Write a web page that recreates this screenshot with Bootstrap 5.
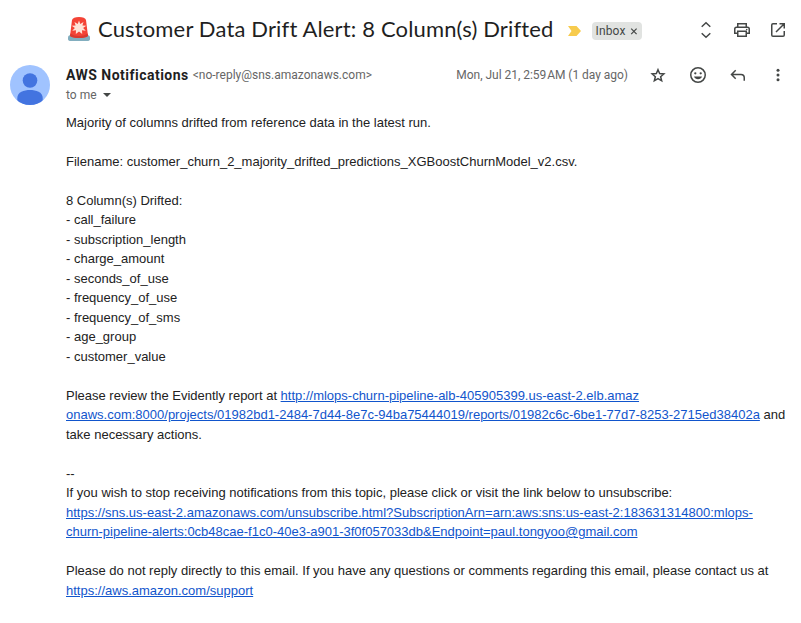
<!DOCTYPE html>
<html lang="en">
<head>
<meta charset="utf-8">
<meta name="viewport" content="width=device-width, initial-scale=1">
<title>Customer Data Drift Alert</title>
<link href="https://cdn.jsdelivr.net/npm/bootstrap@5.3.0/dist/css/bootstrap.min.css" rel="stylesheet">
<style>
body { background: #fff; color: #1f1f1f; font-family: Roboto, "Liberation Sans", sans-serif; }
svg { display: block; flex: none; }
.mail { width: 801px; height: 623px; overflow: hidden; }
.subject-bar { height: 60px; padding-left: 66px; padding-right: 13px; }
.siren { margin-bottom: 2px; }
.subject { font: 400 22px/28px Lato, sans-serif; letter-spacing: .15px; margin: 0 0 2px 6px; white-space: nowrap; }
.marker { margin: 1px 0 0 14px; }
.label-chip { background: #e1e3e1; color: #444746; font-size: 12px; line-height: 18px; height: 18px; width: 50px; border-radius: 4px; padding-left: 4px; margin: 2px 0 0 11px; letter-spacing: .15px; }
.tools { gap: 16px; color: #444746; }
.tools.wide { gap: 20px; margin-left: 20px; }
.sender-row { height: 52.75px; padding: 5px 13px 0 10px; }
.who { margin-left: 16px; }
.line-a { height: 20px; white-space: nowrap; }
.from { font: 700 14px/20px Roboto, sans-serif; letter-spacing: .48px; }
.muted { color: #666; font-size: 12px; line-height: 20px; }
.addr { margin-left: 4px; }
.date { letter-spacing: -.03px; }
.tight { word-spacing: -2px; }
.caret { margin-left: 6px; }
.message { font: 13px/19.5px "Liberation Sans", Arial, sans-serif; color: #222; padding-left: 66px; white-space: pre; }
.message a { color: #1155cc; text-decoration: underline; }
</style>
<script src="https://cdn.jsdelivr.net/npm/bootstrap@5.3.0/dist/js/bootstrap.bundle.min.js"></script>
</head>
<body>
<main class="mail">
  <header class="subject-bar d-flex align-items-center">
    <svg class="siren" width="26" height="26" viewBox="0 0 26 26" aria-label="Alert">
      <path d="M2 21.5 Q2 19 5 19 H21 Q24 19 24 21.5 V23 Q24 25 21 25 H5 Q2 25 2 23Z" fill="#82aebf"/>
      <path d="M6 4 Q7 1 13 1 Q19 1 20 4 L22 20 Q19 22 13 22 Q7 22 4 20Z" fill="#f44336"/>
      <path d="M4.300 17.500 L4 20 Q7 22 13 22 Q19 22 22 20 L21.700 17.500 Q18 20 13 20 Q8 20 4.300 17.500Z" fill="#d83a30"/>
      <path d="M13 4.500 l1.300 3.500 3.200-2 -1.100 3.600 3.900.2 -3.200 2.100 2.700 2.800 -3.800-.5 .2 3.800 -3.200-2.600 -3.200 2.600 .2-3.800 -3.800.5 2.700-2.800 -3.200-2.100 3.900-.2 -1.100-3.600 3.200 2z" fill="#ffe4d8"/>
    </svg>
    <h1 class="subject">Customer Data Drift Alert: 8 Column(s) Drifted</h1>
    <svg class="marker" width="13" height="10" viewBox="0 0 13 10"><path d="M0 0 H8.500 L13 5 8.500 10 H0 L3.500 5Z" fill="#f7cb4d"/></svg>
    <span class="label-chip d-flex align-items-center">Inbox<svg width="8" height="8" viewBox="0 0 8 8" class="ms-1"><path d="M1.200 1.700 6.600 7.100M6.600 1.700 1.200 7.100" stroke="#444746" stroke-width="1.200"/></svg></span>
    <div class="tools d-flex ms-auto">
      <svg width="20" height="20" viewBox="0 0 20 20" fill="none" stroke="currentColor" stroke-width="1.500"><path d="M5.700 6.800 10 2.800l4.300 4M5.700 13.200 10 17.200l4.300-4"/></svg>
      <svg width="20" height="20" viewBox="0 0 20 20" fill="none" stroke="currentColor" stroke-width="1.500"><path d="M5.750 7V3.750h8.500V7M5.750 13.250h-3V9c0-1 .7-1.750 1.750-1.750h11c1 0 1.750.7 1.750 1.750v4.250h-3M5.750 11.250h8.500v5h-8.500z"/><circle cx="14.700" cy="9.500" r=".8" fill="currentColor" stroke="none"/></svg>
      <svg width="20" height="20" viewBox="0 0 20 20" fill="none" stroke="currentColor" stroke-width="1.500"><path d="M9 3.750H5c-.8 0-1.250.5-1.250 1.250v10c0 .8.500 1.250 1.250 1.250h10c.8 0 1.250-.5 1.250-1.250v-4M11.500 3.750h4.750V8.500M16 4 8 12"/></svg>
    </div>
  </header>
  <section class="sender-row d-flex align-items-start">
    <svg width="40" height="40" viewBox="0 0 40 40"><defs><clipPath id="disc"><circle cx="20" cy="20" r="20"/></clipPath></defs><g clip-path="url(#disc)"><path d="M0 0h40v40H0z" fill="#a0c3ff"/><circle cx="20" cy="15.500" r="7.300" fill="#4374e0"/><path d="M7.300 40V33C7.300 27 14 25 20 25s12.700 2 12.700 8v7z" fill="#4374e0"/></g></svg>
    <div class="who">
      <div class="line-a d-flex align-items-center"><span class="from">AWS Notifications</span><span class="muted addr">&lt;no-reply@sns.amazonaws.com&gt;</span></div>
      <div class="muted d-flex align-items-center"><span>to me</span><svg width="8" height="4" viewBox="0 0 8 4" class="caret"><path d="M0 0h8L4 4z" fill="#444746"/></svg></div>
    </div>
    <div class="ms-auto d-flex align-items-center line-a">
      <span class="muted date">Mon, Jul 21, <span class="tight">2:59 AM</span> (1 day ago)</span>
      <div class="tools wide d-flex">
        <svg width="20" height="20" viewBox="0 0 20 20" fill="none" stroke="currentColor" stroke-width="1.500"><path d="M10 4.700l1.650 3.900 4.200.35-3.200 2.750 1 4.100L10 13.600l-3.650 2.200 1-4.100-3.200-2.750 4.200-.35z"/></svg>
        <svg width="20" height="20" viewBox="0 0 20 20" fill="currentColor"><circle cx="10" cy="10" r="7.250" fill="none" stroke="currentColor" stroke-width="1.500"/><circle cx="7.300" cy="8.300" r="1.150"/><circle cx="12.700" cy="8.300" r="1.150"/><path d="M6 11.600h8c-.6 1.700-2.200 2.700-4 2.700s-3.400-1-4-2.700z"/></svg>
        <svg width="20" height="20" viewBox="0 0 20 20" fill="none" stroke="currentColor" stroke-width="1.500"><path d="M16.250 15.800v-3c0-2-1.250-3.250-3.250-3.250H4.500M7.700 5.300 3.500 9.550l4.200 4.200"/></svg>
        <svg width="20" height="20" viewBox="0 0 20 20" fill="currentColor"><circle cx="10" cy="5.200" r="1.500"/><circle cx="10" cy="10" r="1.500"/><circle cx="10" cy="14.800" r="1.500"/></svg>
      </div>
    </div>
  </section>
  <article class="message">Majority of columns drifted from reference data in the latest run.

Filename: customer_churn_2_majority_drifted_predictions_XGBoostChurnModel_v2.csv.

8 Column(s) Drifted:
- call_failure
- subscription_length
- charge_amount
- seconds_of_use
- frequency_of_use
- frequency_of_sms
- age_group
- customer_value

Please review the Evidently report at <a href="#">http://mlops-churn-pipeline-alb-405905399.us-east-2.elb.amaz</a>
<a href="#">onaws.com:8000/projects/01982bd1-2484-7d44-8e7c-94ba75444019/reports/01982c6c-6be1-77d7-8253-2715ed38402a</a> and
take necessary actions.

--
If you wish to stop receiving notifications from this topic, please click or visit the link below to unsubscribe:
<a href="#">https://sns.us-east-2.amazonaws.com/unsubscribe.html?SubscriptionArn=arn:aws:sns:us-east-2:183631314800:mlops-</a>
<a href="#">churn-pipeline-alerts:0cb48cae-f1c0-40e3-a901-3f0f057033db&amp;Endpoint=paul.tongyoo@gmail.com</a>

Please do not reply directly to this email. If you have any questions or comments regarding this email, please contact us at
<a href="#">https://aws.amazon.com/support</a></article>
</main>
</body>
</html>
